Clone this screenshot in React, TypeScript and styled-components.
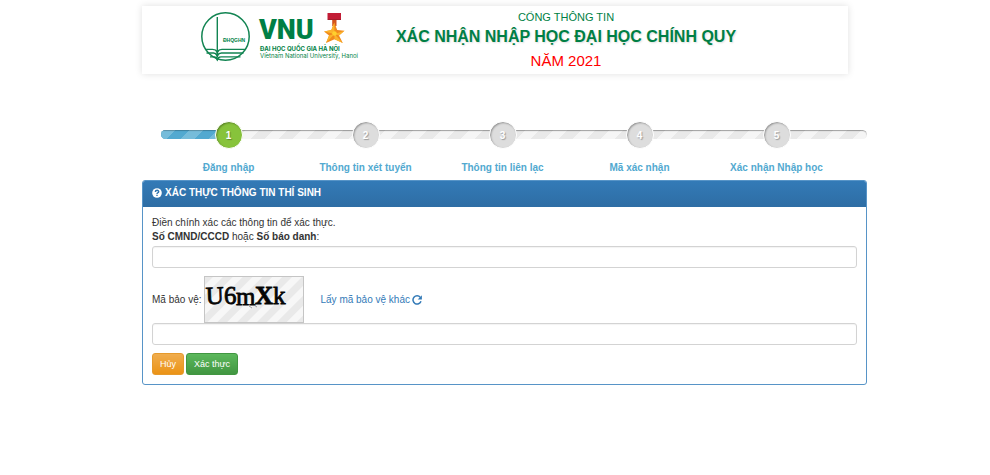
import React from "react";
import styled, { createGlobalStyle, css } from "styled-components";

const GlobalStyle = createGlobalStyle`
  *, *::before, *::after { box-sizing: border-box; }
  body {
    margin: 0;
    background: #fff;
    color: #333;
    font-family: "Liberation Sans", Arial, sans-serif;
    font-size: 10px;
    line-height: 14px;
  }
`;

const Page = styled.main`
  padding: 6px 123px 24px 142px;
`;

const Header = styled.header`
  display: flex;
  align-items: flex-start;
  height: 68px;
  margin-right: 19px;
  padding-left: 58px;
  background: #fff;
  box-shadow: 0 0 7px rgba(0, 0, 0, 0.13);
`;

const LogoArt = styled.svg`
  flex: none;
  width: 164px;
  height: 60px;
`;

const Titles = styled.div`
  flex: 1;
  padding-right: 80px;
  text-align: center;
  white-space: nowrap;
`;

const Portal = styled.p`
  margin: 3px 0 0;
  color: #007f45;
  font-size: 11px;
  line-height: 16px;
`;

const Title = styled.h1`
  margin: 0;
  color: #007f45;
  font-size: 16px;
  line-height: 24px;
  text-shadow: 1px 1px 2px #ddd;
`;

const Year = styled.p`
  margin: 0;
  color: #f00;
  font-size: 15px;
  line-height: 24px;
`;

const Wizard = styled.nav`
  display: grid;
  margin: 47px 0 0 18px;
`;

const stripes = css`
  background-image: linear-gradient(
    135deg,
    var(--stripe) 25%,
    transparent 25%,
    transparent 50%,
    var(--stripe) 50%,
    var(--stripe) 75%,
    transparent 75%
  );
  background-size: 28px 28px;
`;

const Track = styled.div`
  --stripe: #f5f5f5;
  grid-area: 1 / 1;
  height: 9px;
  margin: 9px 0 0 1px;
  overflow: hidden;
  border-radius: 5px;
  background-color: #e9e9e9;
  box-shadow: inset 0 1px 1px rgba(0, 0, 0, 0.35);
  ${stripes}
`;

const Fill = styled.div`
  --stripe: #76bcda;
  width: 9%;
  height: 100%;
  background-color: #52a9d0;
  box-shadow: inset 0 1px 1px rgba(0, 0, 0, 0.25);
  ${stripes}
`;

const Steps = styled.ol`
  grid-area: 1 / 1;
  display: grid;
  grid-template-columns: repeat(5, 1fr);
  margin: 0 22px 0 0;
  padding: 0;
  list-style: none;
`;

const Step = styled.li`
  display: flex;
  flex-direction: column;
  align-items: center;
  gap: 12px;
  color: #52a9d0;
  font-weight: bold;
  white-space: nowrap;
`;

const Circle = styled.span<{ $active: boolean }>`
  width: 28px;
  height: 28px;
  border: 1px solid #fff;
  border-radius: 50%;
  background: ${(p) => (p.$active ? "#87c33b" : "#ddd")};
  box-shadow: inset 1px 1px 2px rgba(0, 0, 0, 0.35);
  color: #fff;
  line-height: 27px;
  text-align: center;
  text-shadow: 1px 1px 1px rgba(0, 0, 0, 0.3);
`;

const Panel = styled.section`
  margin-top: 5px;
  border: 1px solid #5794c7;
  border-radius: 3px;
  overflow: hidden;
`;

const PanelHeading = styled.h2`
  display: flex;
  align-items: center;
  gap: 3px;
  height: 26px;
  margin: 0;
  padding: 0 9px 2px;
  background: linear-gradient(#337ab7, #2e6da4);
  color: #fff;
  font-size: 10px;
  line-height: 14px;
`;

const Form = styled.form`
  padding: 9px;
`;

const FieldLabel = styled.label`
  display: block;
  margin-bottom: 2px;
`;

const TextInput = styled.input`
  display: block;
  width: 100%;
  height: 22px;
  padding: 4px 8px;
  border: 1px solid #d3d3d3;
  border-radius: 3px;
  background: #fff;
  box-shadow: inset 0 1px 1px rgba(0, 0, 0, 0.05);
  color: #555;
  font: inherit;
`;

const CaptchaRow = styled.div`
  display: flex;
  align-items: center;
  margin-top: 8px;
`;

const CaptchaArt = styled.svg`
  width: 100px;
  height: 47px;
  margin-left: 3px;
`;

const Reload = styled.a`
  display: flex;
  align-items: center;
  gap: 2px;
  margin-left: 16px;
  color: #337ab7;
  text-decoration: none;
`;

const Actions = styled.div`
  display: flex;
  gap: 2px;
  margin-top: 8px;
`;

const Button = styled.button<{ $tone: "warning" | "success" }>`
  height: 22px;
  padding: 0 7px;
  border: 1px solid ${(p) => (p.$tone === "warning" ? "#e69a2c" : "#419641")};
  border-radius: 3px;
  background: ${(p) => (p.$tone === "warning" ? "linear-gradient(#f0ad4e, #eb9316)" : "linear-gradient(#5cb85c, #419641)")};
  color: #fff;
  font: 9px/14px "Liberation Sans", Arial, sans-serif;
`;

const Logo = () => (
  <LogoArt viewBox="200 6 164 60" role="img" aria-label="VNU">
    <g fill="none" stroke="#128452">
      <circle cx="225.500" cy="36.500" r="23.700" strokeWidth="1.500" />
      <path d="M217.300 17V57" strokeWidth="1.400" />
      <path d="M205 49.300H212.500Q216 49.500 217.300 51.500Q218.700 49.500 222 49.300H246" strokeWidth="1.300" />
      <path d="M206.500 53H213.500Q216 53.200 217.300 55Q218.700 53.200 221.500 53H243.500" strokeWidth="1.300" />
      <path d="M210 56.800H214Q216.300 57 217.300 58.500Q218.500 57 221 56.800H240.500" strokeWidth="1.300" />
    </g>
    <path d="M214.500 49.500L217.300 51.500L220.100 49.500L217.300 54ZM214.500 53L217.300 55L220.100 53L217.300 57.500ZM214.500 56.500L217.300 58L220.100 56.500L217.300 61.500Z" fill="#128452" />
    <g fill="#007f45" fontFamily="Inter, Liberation Sans, sans-serif" fontWeight="bold">
      <text x="223" y="42" fontFamily="Liberation Sans, Arial, sans-serif" fontSize="5">ĐHQGHN</text>
      <text x="259" y="39" fontFamily="Roboto, Liberation Sans, sans-serif" fontWeight="900" fontSize="27">VNU</text>
      <text x="260" y="51" fontSize="6">ĐẠI HỌC QUỐC GIA HÀ NỘI</text>
      <text x="260" y="58" fontSize="6" fontWeight="normal">Vietnam National University, Hanoi</text>
    </g>
    <path d="M327.500 13H341V19H327.500Z" fill="#c21c35" />
    <path d="M327.500 19H341V20H327.500Z" fill="#a31c2a" />
    <path d="M332.200 20H336.500V26H332.200Z" fill="#d4551d" />
    <path d="M334.300 22.500L337.200 30L344.500 30.700L339 35.500L342.800 43L334.500 39.300L326 43L329 35.500L324 31.500L331.300 30Z" fill="#f18a1c" />
    <path d="M334.300 22.500L334.500 34L331.300 30ZM344.500 30.700L334.500 34L339 35.500ZM342.800 43L334.500 34V39.300ZM326 43L334.500 34L329 35.500ZM324 31.500L334.500 34L331.300 30Z" fill="#fbb42b" />
    <circle cx="334.500" cy="33.500" r="2.300" fill="#ffd02d" />
  </LogoArt>
);

const QuestionIcon = () => (
  <svg width="10" height="10" viewBox="0 0 10 10" aria-hidden="true">
    <circle cx="5" cy="5" r="4.800" fill="#fff" />
    <path d="M3.300 4Q3.400 2.300 5.100 2.300Q6.800 2.400 6.700 3.700Q6.700 4.500 5.700 4.900Q5 5.200 5 6" fill="none" stroke="#3074af" strokeWidth="1.400" />
    <path d="M4.300 6.700H5.700V8H4.300Z" fill="#3074af" />
  </svg>
);

const ReloadIcon = () => (
  <svg width="10" height="10" viewBox="0 0 10 10" aria-hidden="true">
    <path d="M8.300 2.400A4.100 4.100 0 1 0 9 6.200" fill="none" stroke="#337ab7" strokeWidth="1.500" />
    <path d="M9.900 .2V4.400H5.700Z" fill="#337ab7" />
  </svg>
);

const Captcha = () => (
  <CaptchaArt viewBox="0 0 100 47" role="img" aria-label="Mã bảo vệ">
    <defs>
      <pattern id="captcha-stripes" width="14" height="14" patternUnits="userSpaceOnUse" patternTransform="rotate(45)">
        <path d="M0 0H14V14H0Z" fill="#f7f7f7" />
        <path d="M0 0H7V14H0Z" fill="#e9e9e9" />
      </pattern>
    </defs>
    <rect x=".5" y=".5" width="99" height="46" fill="url(#captcha-stripes)" stroke="#c5c5c5" />
    <g fill="#050505" stroke="#050505" strokeWidth=".8" fontFamily="Liberation Serif, serif" fontSize="25">
      <text x="2" y="28" transform="rotate(-2 10 28)">U</text>
      <text x="20" y="28">6</text>
      <text x="32" y="29">m</text>
      <text x="51" y="28" fontWeight="bold">X</text>
      <text x="69" y="28">k</text>
    </g>
    <path d="M45 30L48 32M50 29L53 31" stroke="#777" strokeWidth=".7" />
  </CaptchaArt>
);

const steps = ["Đăng nhập", "Thông tin xét tuyển", "Thông tin liên lạc", "Mã xác nhận", "Xác nhận Nhập học"];

export default function App() {
  return (
    <>
      <GlobalStyle />
      <Page>
        <Header>
          <Logo />
          <Titles>
            <Portal>CỔNG THÔNG TIN</Portal>
            <Title>XÁC NHẬN NHẬP HỌC ĐẠI HỌC CHÍNH QUY</Title>
            <Year>NĂM 2021</Year>
          </Titles>
        </Header>
        <Wizard>
          <Track>
            <Fill />
          </Track>
          <Steps>
            {steps.map((name, i) => (
              <Step key={name} aria-current={i === 0 ? "step" : undefined}>
                <Circle $active={i === 0}>{i + 1}</Circle>
                {name}
              </Step>
            ))}
          </Steps>
        </Wizard>
        <Panel>
          <PanelHeading>
            <QuestionIcon />
            XÁC THỰC THÔNG TIN THÍ SINH
          </PanelHeading>
          <Form onSubmit={(e) => e.preventDefault()}>
            <div>Điền chính xác các thông tin để xác thực.</div>
            <FieldLabel htmlFor="candidate">
              <b>Số CMND/CCCD</b> hoặc <b>Số báo danh</b>:
            </FieldLabel>
            <TextInput id="candidate" type="text" />
            <CaptchaRow>
              <label htmlFor="captcha">Mã bảo vệ:</label>
              <Captcha />
              <Reload href="#captcha">
                Lấy mã bảo vệ khác
                <ReloadIcon />
              </Reload>
            </CaptchaRow>
            <TextInput id="captcha" type="text" />
            <Actions>
              <Button type="button" $tone="warning">Hủy</Button>
              <Button type="submit" $tone="success">Xác thực</Button>
            </Actions>
          </Form>
        </Panel>
      </Page>
    </>
  );
}
